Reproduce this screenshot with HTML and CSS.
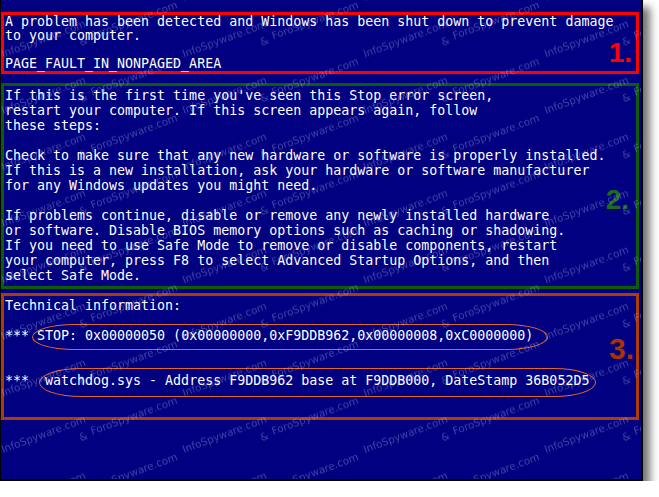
FILE: index.html
```html
<!DOCTYPE html>
<html lang="en">
<head>
    <meta charset="UTF-8">
    <meta name="viewport" content="width=device-width, initial-scale=1.0">
    <title>PAGE_FAULT_IN_NONPAGED_AREA</title>
    <link rel="stylesheet" href="styles.css">
</head>
<body>
    <div class="screen">
        <div class="block block-red">
<pre>A problem has been detected and Windows has been shut down to prevent damage
to your computer.

PAGE_FAULT_IN_NONPAGED_AREA</pre>
            <span class="mark mark-red">1.</span>
        </div>

        <div class="block block-green">
<pre>If this is the first time you've seen this Stop error screen,
restart your computer. If this screen appears again, follow
these steps:

Check to make sure that any new hardware or software is properly installed.
If this is a new installation, ask your hardware or software manufacturer
for any Windows updates you might need.

If problems continue, disable or remove any newly installed hardware
or software. Disable BIOS memory options such as caching or shadowing.
If you need to use Safe Mode to remove or disable components, restart
your computer, press F8 to select Advanced Startup Options, and then
select Safe Mode.</pre>
            <span class="mark mark-green">2.</span>
        </div>

        <div class="block block-rust">
<pre>Technical information:

*** <span class="oval oval-stop">STOP: 0x00000050 (0x00000000,0xF9DDB962,0x00000008,0xC0000000)</span>


***  <span class="oval oval-driver">watchdog.sys - Address F9DDB962 base at F9DDB000, DateStamp 36B052D5</span></pre>
            <span class="mark mark-rust">3.</span>
        </div>

        <!-- marca de agua -->
        <svg class="watermark" width="640" height="479" aria-hidden="true">
            <defs>
                <g id="wm-group" transform="translate(2 57.5) rotate(-20.3)" font-family="DejaVu Sans, sans-serif" font-size="10.3" fill="#d4d4ff">
                    <text x="0" y="0">InfoSpyware.com</text>
                    <text x="77" y="16">&amp;</text>
                    <text x="90" y="14">ForoSpyware.com</text>
                </g>
                <pattern id="wm" width="181" height="56.5" patternUnits="userSpaceOnUse">
                    <use href="#wm-group"/>
                    <use href="#wm-group" y="-56.5"/>
                    <use href="#wm-group" y="56.5"/>
                </pattern>
            </defs>
            <rect width="640" height="479" fill="url(#wm)"/>
        </svg>
    </div>
</body>
</html>
```

FILE: styles.css
```css
body {
    margin: 0;
    background-color: #fff;
}

.screen {
    position: relative;
    width: 640px;
    height: 467px;
    padding-top: 12px;
    background-color: #000080;
    border-left: 1px solid #000;
    border-right: 2px solid #000;
    border-bottom: 2px solid #000;
    box-shadow: 7px 7px 8px rgba(0, 0, 0, 0.55);
    overflow: hidden;
}

pre {
    margin: 0;
    font-family: 'DejaVu Sans Mono', monospace;
    font-size: 13.3px;
    line-height: 15px;
    color: #fff;
}

.block {
    position: relative;
    margin-right: 2px;
    border: 3px solid;
    padding: 0 1px;
}

.block-red {
    border-color: #ff0000;
}

.block-red pre {
    line-height: 14px;
}

.block-green {
    margin-top: 9px;
    border-color: #0b5d0b;
    padding: 2px 1px 3px;
}

.block-rust {
    margin-top: 4px;
    border-color: #b03a05;
    padding: 2px 1px 29px;
}

.mark {
    position: absolute;
    font-family: 'Liberation Sans', Arial, sans-serif;
    font-weight: bold;
    font-size: 28px;
    line-height: 1;
}

.mark-red {
    top: 24px;
    right: 4px;
    color: #ff0000;
}

.mark-green {
    top: 100px;
    right: 7px;
    color: #1c6b1c;
}

.mark-rust {
    top: 38px;
    right: 2px;
    font-size: 30px;
    color: #a83200;
}

.oval {
    display: inline-block;
    position: relative;
}

.oval::before {
    content: "";
    position: absolute;
    border: 1.5px solid #e5662c;
    border-radius: 42px / 50%;
}

.oval-stop::before {
    top: -4px;
    bottom: -7px;
    left: -5px;
    right: -15px;
}

.oval-driver::before {
    top: -5px;
    bottom: -9px;
    left: -6px;
    right: -7px;
}

.watermark {
    position: absolute;
    top: 0;
    left: 0;
    opacity: 0.3;
    pointer-events: none;
}
```
